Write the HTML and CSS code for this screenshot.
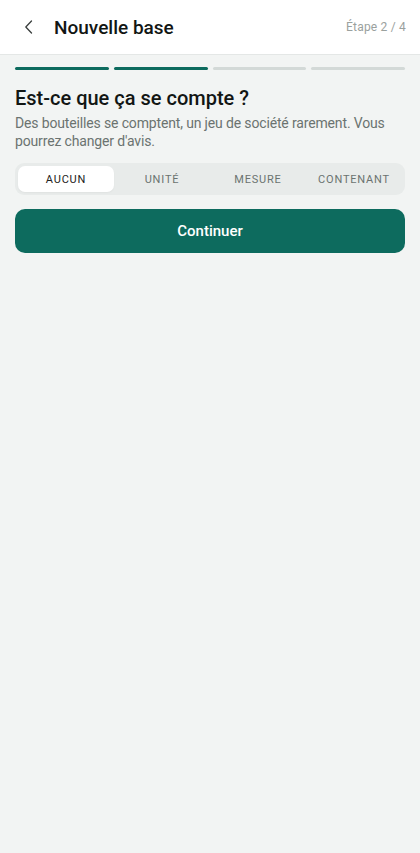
FILE: index.html
```html
<!DOCTYPE html>
<html lang="fr">
<head>
<meta charset="utf-8">
<meta name="viewport" content="width=device-width, initial-scale=1">
<link rel="stylesheet" href="styles.css">
</head>
<body>
<header class="topbar">
  <button class="back" aria-label="Retour">
    <svg width="10" height="14" viewBox="0 0 10 14" fill="none"><path d="M7.5 1 L1.8 7 L7.5 13" stroke="#3a3f3d" stroke-width="1.3" stroke-linecap="round" stroke-linejoin="round"/></svg>
  </button>
  <h1 class="title">Nouvelle base</h1>
  <span class="step">Étape 2 / 4</span>
</header>
<main class="content">
  <div class="progress">
    <span class="seg done"></span>
    <span class="seg done"></span>
    <span class="seg"></span>
    <span class="seg"></span>
  </div>
  <h2 class="question">Est-ce que ça se compte ?</h2>
  <p class="hint">Des bouteilles se comptent, un jeu de société rarement. Vous pourrez changer d'avis.</p>
  <div class="segmented">
    <button class="opt active">AUCUN</button>
    <button class="opt">UNITÉ</button>
    <button class="opt">MESURE</button>
    <button class="opt">CONTENANT</button>
  </div>
  <button class="primary">Continuer</button>
</main>
</body>
</html>
```
FILE: styles.css
```css
* { box-sizing: border-box; }
html, body { margin: 0; padding: 0; }
body {
  background: #f2f4f3;
  font-family: Roboto, "Liberation Sans", sans-serif;
  color: #141816;
  min-height: 853px;
}
.topbar {
  height: 55px;
  background: #ffffff;
  border-bottom: 1px solid #e4e7e6;
  display: flex;
  align-items: center;
  padding: 0 14px 0 19px;
}
.back {
  width: 20px;
  height: 20px;
  border: 0;
  background: none;
  padding: 0;
  display: flex;
  align-items: center;
  justify-content: center;
  margin-right: 15px;
}
.title {
  margin: 0;
  font-size: 19px;
  font-weight: 500;
  color: #121614;
  flex: 1;
}
.step {
  font-size: 12px;
  color: #9aa19e;
  letter-spacing: 0.2px;
}
.content {
  padding: 12px 15px 0;
}
.progress {
  display: flex;
  gap: 5px;
}
.seg {
  flex: 1;
  height: 3px;
  border-radius: 2px;
  background: #d3d9d7;
}
.seg.done { background: #0d6b5e; }
.question {
  margin: 16px 0 0;
  font-size: 20px;
  font-weight: 500;
  line-height: 24px;
  color: #121614;
}
.hint {
  margin: 4px 0 0;
  font-size: 14px;
  letter-spacing: -0.15px;
  line-height: 18px;
  color: #6b7370;
}
.segmented {
  margin-top: 13px;
  height: 32px;
  background: #e8ebea;
  border-radius: 9px;
  padding: 3px;
  display: grid;
  grid-template-columns: repeat(4, 1fr);
}
.opt {
  border: 0;
  background: none;
  font-family: inherit;
  font-size: 11px;
  letter-spacing: 0.8px;
  color: #6b7370;
  border-radius: 7px;
  padding: 0;
}
.opt.active {
  background: #ffffff;
  color: #1d2220;
  box-shadow: 0 1px 2px rgba(0,0,0,0.04);
}
.primary {
  margin-top: 14px;
  width: 100%;
  height: 44px;
  border: 0;
  border-radius: 10px;
  background: #0d6b5e;
  color: #ffffff;
  font-family: inherit;
  font-size: 15px;
  font-weight: 500;
  display: block;
}
```
